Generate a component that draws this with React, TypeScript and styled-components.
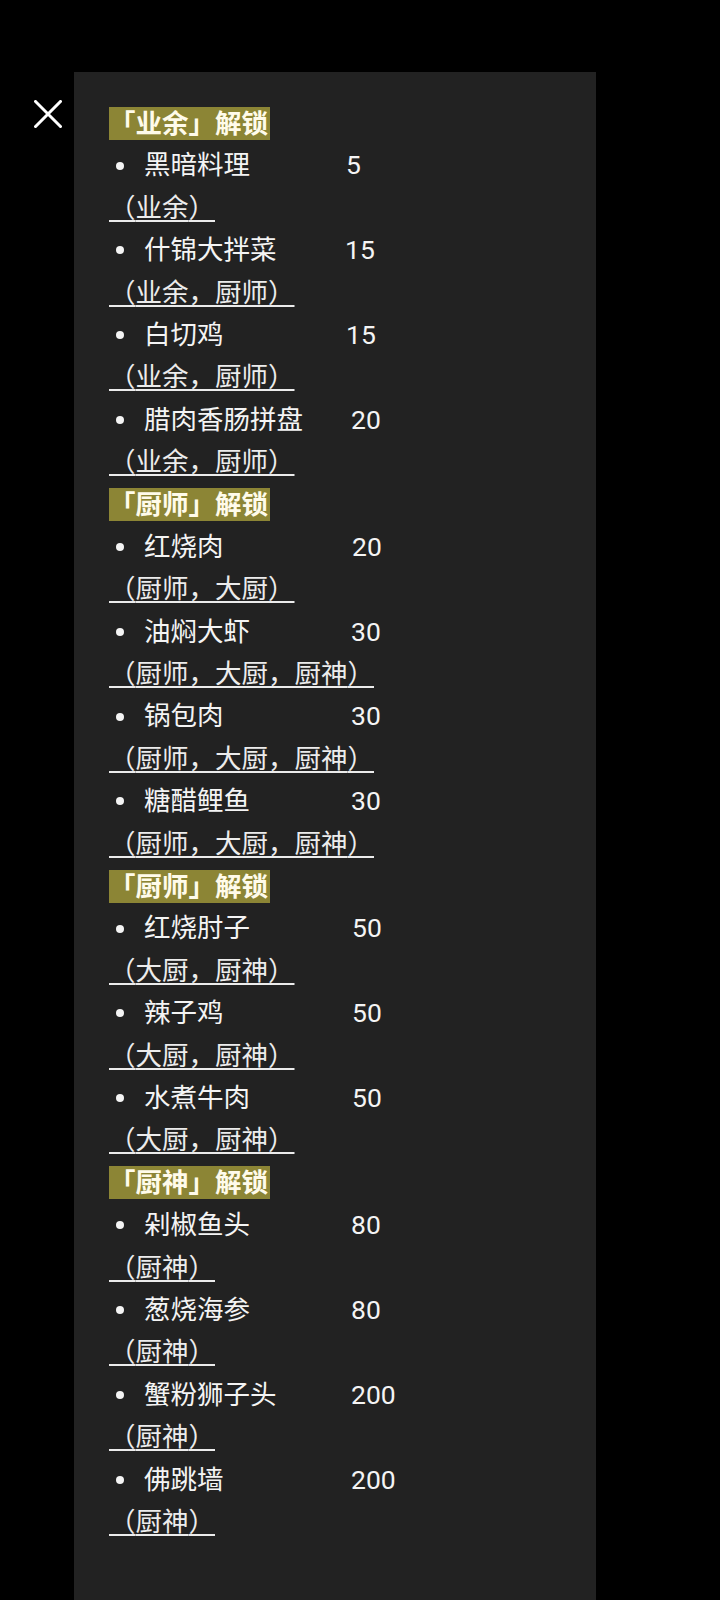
import styled, { createGlobalStyle } from 'styled-components';

const GlobalStyle = createGlobalStyle`
  html, body, #root {
    margin: 0;
    padding: 0;
    height: 100%;
    background: #000;
  }
  body {
    font-family: Roboto, "Noto Sans CJK SC", sans-serif;
  }
`;

const Page = styled.div`
  display: flex;
  flex-direction: row;
  align-items: stretch;
  min-height: 100vh;
  padding-top: 72px;
  box-sizing: border-box;
`;

const CloseColumn = styled.div`
  width: 74px;
  flex: 0 0 74px;
  display: flex;
  justify-content: flex-start;
  align-items: flex-start;
  padding: 28px 0 0 34px;
  box-sizing: border-box;
`;

const CloseButton = styled.button`
  border: none;
  background: none;
  padding: 0;
  width: 28px;
  height: 28px;
  cursor: pointer;
  display: flex;
`;

const Panel = styled.div`
  width: 522px;
  flex: 0 0 522px;
  background: #222222;
  padding: 30px 0 40px 35px;
  box-sizing: border-box;
  color: #f4f4f4;
  font-size: 26.5px;
  line-height: 42.4px;
`;

const SectionHeader = styled.div`
  height: 42.4px;
  display: flex;
  align-items: center;
`;

const HeaderBadge = styled.span`
  display: inline-block;
  background: #8c8535;
  color: #fffbea;
  font-weight: bold;
  line-height: 33px;
  height: 33px;
  padding-right: 2px;
`;

const ItemRow = styled.div`
  display: flex;
  align-items: center;
  height: 42.4px;
`;

const Bullet = styled.span`
  width: 8px;
  height: 8px;
  border-radius: 50%;
  background: #f4f4f4;
  margin: 0 20px 0 7px;
  flex: 0 0 8px;
`;

const DishName = styled.span`
  width: 207px;
  flex: 0 0 207px;
  white-space: nowrap;
`;

const Price = styled.span<{ $shift: number }>`
  white-space: nowrap;
  margin-left: ${(p) => p.$shift}px;
`;

const LevelLine = styled.div`
  height: 42.4px;
`;

const LevelText = styled.span`
  color: #ececec;
  text-decoration: underline;
  text-decoration-thickness: 2px;
  text-underline-offset: 3px;
  padding-right: 2px;
`;

type Dish = { name: string; price: number; levels: string[]; shift?: number };
type Section = { title: string; dishes: Dish[] };

const sections: Section[] = [
  {
    title: '「业余」解锁',
    dishes: [
      { name: '黑暗料理', price: 5, levels: ['业余'], shift: -5 },
      { name: '什锦大拌菜', price: 15, levels: ['业余', '厨师'], shift: -6 },
      { name: '白切鸡', price: 15, levels: ['业余', '厨师'], shift: -5 },
      { name: '腊肉香肠拼盘', price: 20, levels: ['业余', '厨师'] },
    ],
  },
  {
    title: '「厨师」解锁',
    dishes: [
      { name: '红烧肉', price: 20, levels: ['厨师', '大厨'], shift: 1 },
      { name: '油焖大虾', price: 30, levels: ['厨师', '大厨', '厨神'] },
      { name: '锅包肉', price: 30, levels: ['厨师', '大厨', '厨神'] },
      { name: '糖醋鲤鱼', price: 30, levels: ['厨师', '大厨', '厨神'] },
    ],
  },
  {
    title: '「厨师」解锁',
    dishes: [
      { name: '红烧肘子', price: 50, levels: ['大厨', '厨神'], shift: 1 },
      { name: '辣子鸡', price: 50, levels: ['大厨', '厨神'], shift: 1 },
      { name: '水煮牛肉', price: 50, levels: ['大厨', '厨神'], shift: 1 },
    ],
  },
  {
    title: '「厨神」解锁',
    dishes: [
      { name: '剁椒鱼头', price: 80, levels: ['厨神'] },
      { name: '葱烧海参', price: 80, levels: ['厨神'] },
      { name: '蟹粉狮子头', price: 200, levels: ['厨神'] },
      { name: '佛跳墙', price: 200, levels: ['厨神'] },
    ],
  },
];

function CloseIcon() {
  return (
    <svg width="28" height="28" viewBox="0 0 28 28">
      <path d="M1.5 1.5 L26.5 26.5 M26.5 1.5 L1.5 26.5" stroke="#ffffff" strokeWidth="3" strokeLinecap="square" fill="none" />
    </svg>
  );
}

export default function App() {
  return (
    <>
      <GlobalStyle />
      <Page>
        <CloseColumn>
          <CloseButton aria-label="close">
            <CloseIcon />
          </CloseButton>
        </CloseColumn>
        <Panel>
          {sections.map((section, si) => (
            <div key={si}>
              <SectionHeader>
                <HeaderBadge>{section.title}</HeaderBadge>
              </SectionHeader>
              {section.dishes.map((dish) => (
                <div key={dish.name}>
                  <ItemRow>
                    <Bullet />
                    <DishName>{dish.name}</DishName>
                    <Price $shift={dish.shift ?? 0}>{dish.price}</Price>
                  </ItemRow>
                  <LevelLine>
                    <LevelText>（{dish.levels.join('，')}）</LevelText>
                  </LevelLine>
                </div>
              ))}
            </div>
          ))}
        </Panel>
      </Page>
    </>
  );
}
